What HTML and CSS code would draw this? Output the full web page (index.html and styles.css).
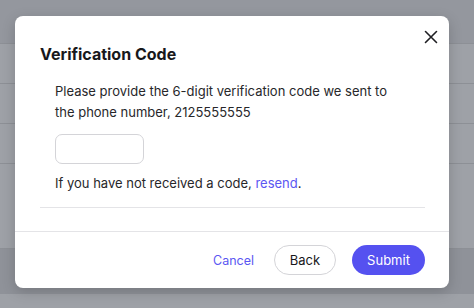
FILE: index.html
```html
<!DOCTYPE html>
<html lang="en">
<head>
  <meta charset="UTF-8">
  <title>Verification Code</title>
  <link rel="stylesheet" href="styles.css">
</head>
<body>
  <div class="backdrop">
    <div class="row row-top"></div>
    <div class="row"></div>
    <div class="row"></div>
    <div class="row"></div>
    <div class="row row-tall"></div>
    <div class="row row-dark"></div>
    <div class="row row-last"></div>
  </div>
  <div class="modal">
    <button class="close" type="button" aria-label="Close">
      <svg width="14" height="14" viewBox="0 0 14 14"><path d="M1.5 1.5l11 11M12.5 1.5l-11 11" stroke="#1f1f23" stroke-width="1.6" stroke-linecap="round"/></svg>
    </button>
    <div class="modal-body">
      <h2>Verification Code</h2>
      <div class="content">
        <p>Please provide the 6-digit verification code we sent to the phone number, 2125555555</p>
        <input class="code-input" type="text">
        <p class="resend">If you have not received a code, <a href="#">resend</a>.</p>
      </div>
      <hr class="divider">
    </div>
    <div class="modal-footer">
      <a href="#" class="btn-link">Cancel</a>
      <button class="btn btn-outline" type="button">Back</button>
      <button class="btn btn-primary" type="button">Submit</button>
    </div>
  </div>
</body>
</html>
```

FILE: styles.css
```css
* { box-sizing: border-box; margin: 0; padding: 0; }
body {
  font-family: Inter, "Noto Sans", sans-serif;
  width: 474px;
  height: 308px;
  overflow: hidden;
  position: relative;
  background: #9c9fa5;
  color: #27272a;
}

/* Faded page behind the overlay */
.backdrop { display: flex; flex-direction: column; height: 308px; }
.row { height: 40px; border-bottom: 1px solid #8d9096; background: #9ea1a7; }
.row-top { height: 44px; background: #94979e; }
.row-tall { height: 85px; }
.row-dark { height: 45px; background: #8f9299; border-bottom: none; }
.row-last { flex: 1; border-bottom: none; }

/* Dialog */
.modal {
  position: absolute;
  top: 16px;
  left: 15px;
  width: 434px;
  height: 272px;
  background: #fff;
  border-radius: 8px;
  box-shadow: 0 4px 14px rgba(0,0,0,0.18);
  display: flex;
  flex-direction: column;
}
.close {
  position: absolute;
  top: 13px;
  right: 10px;
  background: none;
  border: none;
  width: 16px;
  height: 16px;
  display: flex;
  align-items: center;
  justify-content: center;
  cursor: pointer;
}
.modal-body {
  padding: 28px 24px 0 25px;
  border-bottom: 1px solid #e4e4e7;
  height: 216px;
}
.modal-body h2 {
  font-size: 16px;
  font-weight: 700;
  color: #18181b;
  line-height: 20px;
  margin-bottom: 17px;
}
.content { padding-left: 15px; font-size: 13px; line-height: 21px; }
.content p { width: 350px; }
.code-input {
  display: block;
  width: 89px;
  height: 30px;
  margin: 11px 0 9px;
  border: 1px solid #d4d4d8;
  border-radius: 7px;
  outline: none;
}
.content a { color: #5b57f2; text-decoration: none; }
.divider { border: none; border-top: 1px solid #e4e4e7; margin-top: 13px; }

/* Footer buttons */
.modal-footer {
  flex: 1;
  display: flex;
  align-items: center;
  justify-content: flex-end;
  padding: 0 24px 0 0;
  gap: 16px;
}
.btn-link {
  color: #5b57f2;
  text-decoration: none;
  font-size: 12.5px;
  margin-right: 4px;
}
.btn {
  height: 30px;
  border-radius: 15px;
  font-family: inherit;
  font-size: 13px;
  cursor: pointer;
}
.btn-outline { width: 62px; background: #fff; border: 1px solid #d4d4d8; color: #18181b; }
.btn-primary { width: 73px; background: #5551f0; border: none; color: #fff; }
```
